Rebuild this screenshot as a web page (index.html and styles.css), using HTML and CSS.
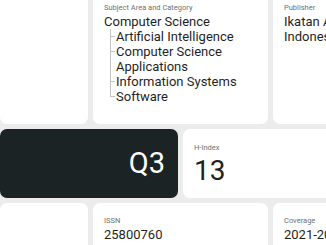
FILE: index.html
```html
<!DOCTYPE html>
<html lang="en">

<head>
  <meta charset="UTF-8">
  <meta name="viewport" content="width=device-width, initial-scale=1.0">
  <title>journal</title>
  <link rel="stylesheet" href="styles.css">
</head>

<body>
  <main class="grid">
    <section class="card side"></section>
    <section class="card wide">
      <p class="label">Subject Area and Category</p>
      <p class="value">Computer Science</p>
      <ul class="tree">
        <li>Artificial Intelligence</li>
        <li>Computer Science Applications</li>
        <li>Information Systems</li>
        <li>Software</li>
      </ul>
    </section>
    <section class="card wide">
      <p class="label">Publisher</p>
      <p class="value">Ikatan Ahli Informatika Indonesia</p>
    </section>

    <section class="card quartile">Q3</section>
    <section class="card hindex">
      <p class="label">H-Index</p>
      <p class="big">13</p>
    </section>

    <section class="card side"></section>
    <section class="card wide">
      <p class="label">ISSN</p>
      <p class="value">25800760</p>
    </section>
    <section class="card wide">
      <p class="label">Coverage</p>
      <p class="value">2021-2025</p>
    </section>
  </main>
</body>

</html>
```

FILE: styles.css
```css
* {
  box-sizing: border-box;
  margin: 0;
  padding: 0;
}

html,
body {
  height: 100%;
  overflow: hidden;
}

body {
  background: #ececec;
  font-family: Roboto, "Noto Sans", sans-serif;
  color: #1f1f1f;
  line-height: 1.2;
}

.grid {
  display: grid;
  grid-template-columns: 88px 85px 85px 85px 85px;
  grid-template-rows: 134px 69px 60px;
  gap: 5px;
  margin-top: -10px;
  width: 448px;
}

.card {
  background: #fff;
  border-radius: 7px;
  padding: 13px 11px;
}

.wide {
  grid-column: span 2;
}

.quartile {
  grid-column: span 2;
  background: #1b2325;
  color: #fff;
  font-size: 29px;
  display: flex;
  align-items: center;
  justify-content: flex-end;
  padding: 0 13px 0 0;
}

.hindex {
  grid-column: span 3;
  padding-top: 14px;
}

.hindex .label {
  margin-bottom: 5px;
}

.label {
  font-size: 7.5px;
  color: #707070;
  margin-bottom: 2px;
}

.value {
  font-size: 13px;
  line-height: 15px;
}

.big {
  font-size: 28px;
  line-height: 1;
}

.tree {
  list-style: none;
  margin-left: 6px;
  font-size: 13px;
  line-height: 15px;
}

.tree li {
  position: relative;
  padding-left: 6px;
}

.tree li::before {
  content: '';
  position: absolute;
  left: 0;
  top: 0;
  width: 4px;
  height: 7px;
  border-left: 1px solid #c4c4c4;
  border-bottom: 1px solid #c4c4c4;
}

.tree li::after {
  content: '';
  position: absolute;
  left: 0;
  top: 7px;
  bottom: 0;
  border-left: 1px solid #c4c4c4;
}

.tree li:last-child::after {
  display: none;
}
```
